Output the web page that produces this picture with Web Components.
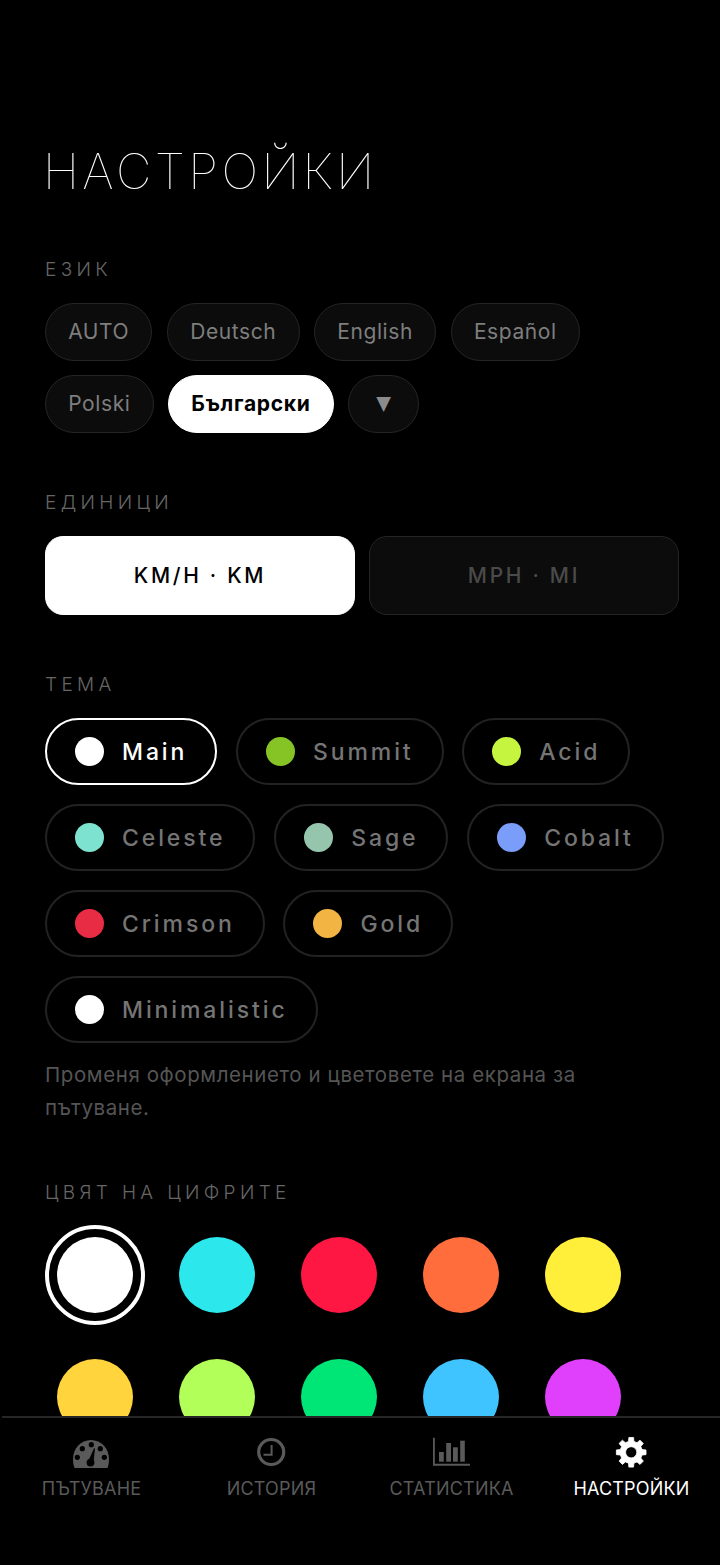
<!DOCTYPE html>
<html lang="bg">
<head>
<meta charset="utf-8">
<title>Настройки</title>
<style>
  html, body { margin: 0; padding: 0; background: #000; }
  body { font-family: Inter, "Noto Sans", sans-serif; color: #fff; }
</style>
</head>
<body>
<settings-app>
  <h-title>НАСТРОЙКИ</h-title>

  <settings-section label="ЕЗИК">
    <chip-row row="14" col="14.5">
      <lang-chip>AUTO</lang-chip>
      <lang-chip>Deutsch</lang-chip>
      <lang-chip>English</lang-chip>
      <lang-chip>Español</lang-chip>
      <lang-chip>Polski</lang-chip>
      <lang-chip selected>Български</lang-chip>
      <lang-chip more>▼</lang-chip>
    </chip-row>
  </settings-section>

  <settings-section label="ЕДИНИЦИ">
    <unit-toggle>
      <unit-button selected>KM/H · KM</unit-button>
      <unit-button>MPH · MI</unit-button>
    </unit-toggle>
  </settings-section>

  <settings-section label="ТЕМА">
    <chip-row row="19" col="18.7">
      <theme-chip color="#fff" selected>Main</theme-chip>
      <theme-chip color="#86c425">Summit</theme-chip>
      <theme-chip color="#c6f53f">Acid</theme-chip>
      <theme-chip color="#7ee2d0">Celeste</theme-chip>
      <theme-chip color="#96c5ad">Sage</theme-chip>
      <theme-chip color="#7a9dfa">Cobalt</theme-chip>
      <theme-chip color="#e82c44">Crimson</theme-chip>
      <theme-chip color="#f2b544">Gold</theme-chip>
      <theme-chip color="#fff">Minimalistic</theme-chip>
    </chip-row>
    <p-note>Променя оформлението и цветовете на екрана за пътуване.</p-note>
  </settings-section>

  <settings-section label="ЦВЯТ НА ЦИФРИТЕ">
    <swatch-grid colors="#ffffff,#2ce8ec,#ff1744,#ff6d3c,#ffee3a,#ffd43c,#b2ff59,#00e676,#40c4ff,#e040fb" selected="0"></swatch-grid>
  </settings-section>

  <tab-bar slot="nav">
    <tab-item icon="gauge">ПЪТУВАНЕ</tab-item>
    <tab-item icon="clock">ИСТОРИЯ</tab-item>
    <tab-item icon="bars">СТАТИСТИКА</tab-item>
    <tab-item icon="gear" active>НАСТРОЙКИ</tab-item>
  </tab-bar>
</settings-app>

<script>
function shadow(el, html) {
  el.attachShadow({ mode: 'open' });
  el.shadowRoot.innerHTML = html;
}

class SettingsApp extends HTMLElement {
  connectedCallback() {
    shadow(this, `
      <style>
        :host { display: flex; flex-direction: column; width: 720px; height: 1565px; background: #000; overflow: hidden; }
        .scroll { flex: 1; min-height: 0; overflow: hidden; padding: 0 41px 0 45px; }
      </style>
      <div class="scroll"><slot></slot></div>
      <slot name="nav"></slot>
    `);
  }
}

class HTitle extends HTMLElement {
  connectedCallback() {
    shadow(this, `
      <style>
        :host { display: block; padding-top: 143px; margin-bottom: 58px; }
        h1 { margin: 0 0 0 -2px; font: 130 49px/58px Inter, sans-serif; letter-spacing: 3.35px; color: #fff; }
      </style>
      <h1><slot></slot></h1>
    `);
  }
}

class SettingsSection extends HTMLElement {
  connectedCallback() {
    shadow(this, `
      <style>
        :host { display: block; margin-bottom: 59px; }
        .label { font: 300 19px/22px Inter, sans-serif; letter-spacing: 4.35px; color: #666; margin-bottom: 22px; }
      </style>
      <div class="label">${this.getAttribute('label')}</div>
      <slot></slot>
    `);
  }
}

class ChipRow extends HTMLElement {
  connectedCallback() {
    shadow(this, `
      <style>
        :host { display: flex; flex-wrap: wrap; row-gap: ${this.getAttribute('row')}px; column-gap: ${this.getAttribute('col')}px; }
      </style>
      <slot></slot>
    `);
  }
}

class LangChip extends HTMLElement {
  connectedCallback() {
    const sel = this.hasAttribute('selected');
    const more = this.hasAttribute('more');
    shadow(this, `
      <style>
        :host { display: inline-flex; align-items: center; justify-content: center; box-sizing: border-box; height: 58px;
          ${more ? 'width: 71px;' : 'padding: 0 22.2px;'} border-radius: 29px;
          border: 1.5px solid ${sel ? '#fff' : '#252525'}; background: ${sel ? '#fff' : '#0c0c0c'};
          color: ${sel ? '#000' : more ? '#8c8c8c' : '#7e7e7e'}; font: ${sel ? 700 : 400} ${more ? 16 : 21}px/24px Inter, sans-serif;
          letter-spacing: ${more ? 0 : sel ? 0.7 : 0.6}px; }
        span { display: inline-block; ${more ? 'transform: scaleY(1.2);' : ''} }
      </style>
      <span><slot></slot></span>
    `);
  }
}

class UnitToggle extends HTMLElement {
  connectedCallback() {
    shadow(this, `
      <style>:host { display: flex; gap: 14px; width: 634px; }</style>
      <slot></slot>
    `);
  }
}

class UnitButton extends HTMLElement {
  connectedCallback() {
    const sel = this.hasAttribute('selected');
    shadow(this, `
      <style>
        :host { flex: 1; display: flex; align-items: center; justify-content: center; box-sizing: border-box; height: 79px;
          border-radius: 18px; border: 1.5px solid ${sel ? '#fff' : '#252525'}; background: ${sel ? '#fff' : '#0c0c0c'};
          color: ${sel ? '#000' : '#4a4a4a'}; font: 500 21px/24px Inter, sans-serif; letter-spacing: 2.7px; }
      </style>
      <slot></slot>
    `);
  }
}

class ThemeChip extends HTMLElement {
  connectedCallback() {
    const sel = this.hasAttribute('selected');
    shadow(this, `
      <style>
        :host { display: inline-flex; align-items: center; gap: 18px; box-sizing: border-box; height: 67px; padding: 0 28px;
          border-radius: 34px; border: 2px solid ${sel ? '#fff' : '#222'};
          color: ${sel ? '#fff' : '#757575'}; font: 550 23px/28px Inter, sans-serif; letter-spacing: 2.9px; }
        i { width: 29px; height: 29px; border-radius: 50%; background: ${this.getAttribute('color')}; flex: none; }
      </style>
      <i></i><slot></slot>
    `);
  }
}

class PNote extends HTMLElement {
  connectedCallback() {
    shadow(this, `
      <style>
        :host { display: block; margin: 15px 0 -1px; width: 600px; font: 400 20.5px/33px Inter, sans-serif; letter-spacing: 0.58px; color: #555; }
      </style>
      <slot></slot>
    `);
  }
}

class SwatchGrid extends HTMLElement {
  connectedCallback() {
    const colors = this.getAttribute('colors').split(',');
    const selected = Number(this.getAttribute('selected'));
    const items = colors.map((c, i) => `<div class="cell${i === selected ? ' on' : ''}"><b style="background:${c}"></b></div>`).join('');
    shadow(this, `
      <style>
        :host { display: grid; grid-template-columns: repeat(5, 100px); gap: 22px 21.9px; margin-top: -1px; }
        .cell { box-sizing: border-box; width: 100px; height: 100px; border-radius: 50%; display: flex; align-items: center; justify-content: center; border: 4px solid transparent; }
        .cell.on { border-color: #fff; }
        b { display: block; width: 76px; height: 76px; border-radius: 50%; }
      </style>
      ${items}
    `);
  }
}

class TabBar extends HTMLElement {
  connectedCallback() {
    shadow(this, `
      <style>
        :host { display: block; flex: none; height: 149px; background: #000; }
        .line { height: 2px; margin-left: 2px; background: #262626; }
        .tabs { display: grid; grid-template-columns: repeat(4, 180px); padding-left: 1.5px; }
      </style>
      <div class="line"></div>
      <div class="tabs"><slot></slot></div>
    `);
  }
}

// 8 toothed gear, centre 18.2,16.3
function gearPath() {
  const cx = 18.2, cy = 16.3, pts = [];
  const polar = (r, deg) => {
    const a = (deg - 90) * Math.PI / 180;
    return (cx + r * Math.cos(a)).toFixed(2) + ' ' + (cy + r * Math.sin(a)).toFixed(2);
  };
  for (let i = 0; i < 8; i++) {
    const a = i * 45;
    pts.push(polar(11.2, a - 14), polar(15, a - 9), polar(15, a + 9), polar(11.2, a + 14));
  }
  return 'M' + pts.join('L') + 'Z';
}

const ICONS = {
  gauge: `<path d="M1.5 32C.5 29.5 0 26.5 0 23 0 12.5 8 4 18 4s18 8.5 18 19c0 3.5-.5 6.5-1.5 9Z"/>
    <g fill="#000"><circle cx="4.3" cy="21.3" r="2.6"/><circle cx="9.3" cy="12.7" r="2.6"/><circle cx="18.3" cy="8.7" r="2.6"/><circle cx="27.3" cy="12.7" r="2.6"/><circle cx="31.3" cy="21.3" r="2.6"/>
    <circle cx="17.5" cy="26.6" r="3.9"/><path d="M21 12.2l1 .2-1.4 13h-5.5Z"/></g>`,
  clock: `<circle cx="18.2" cy="16" r="12.5" fill="none" stroke="currentColor" stroke-width="3.2"/><path d="M18.6 9v9.7H10.5" fill="none" stroke="currentColor" stroke-width="2"/>`,
  bars: `<path d="M0 1.7h1.8v26h35.2v2H0Z"/><rect x="6" y="16" width="4.8" height="9.7"/><rect x="13.2" y="7" width="4.8" height="18.7"/><rect x="20" y="11.3" width="4.8" height="14.4"/><rect x="27.2" y="4.7" width="4.6" height="21"/>`,
  gear: `<path fill-rule="evenodd" stroke="currentColor" stroke-width=".8" stroke-linejoin="round" d="${gearPath()}M18.2 10.7a5.6 5.6 0 1 0 0 11.2 5.6 5.6 0 0 0 0-11.2Z"/>`
};

class TabItem extends HTMLElement {
  connectedCallback() {
    const active = this.hasAttribute('active');
    shadow(this, `
      <style>
        :host { display: flex; flex-direction: column; align-items: center; padding-top: 18px;
          color: ${active ? '#fff' : '#5a5a5a'}; font: 400 18px/22px Inter, sans-serif; letter-spacing: 0.2px; }
        svg { width: 37px; height: 36px; fill: currentColor; display: block; margin-bottom: 6px; overflow: visible; }
      </style>
      <svg viewBox="0 0 37 36">${ICONS[this.getAttribute('icon')]}</svg>
      <slot></slot>
    `);
  }
}

customElements.define('settings-app', SettingsApp);
customElements.define('h-title', HTitle);
customElements.define('settings-section', SettingsSection);
customElements.define('chip-row', ChipRow);
customElements.define('lang-chip', LangChip);
customElements.define('unit-toggle', UnitToggle);
customElements.define('unit-button', UnitButton);
customElements.define('theme-chip', ThemeChip);
customElements.define('p-note', PNote);
customElements.define('swatch-grid', SwatchGrid);
customElements.define('tab-bar', TabBar);
customElements.define('tab-item', TabItem);
</script>
</body>
</html>
